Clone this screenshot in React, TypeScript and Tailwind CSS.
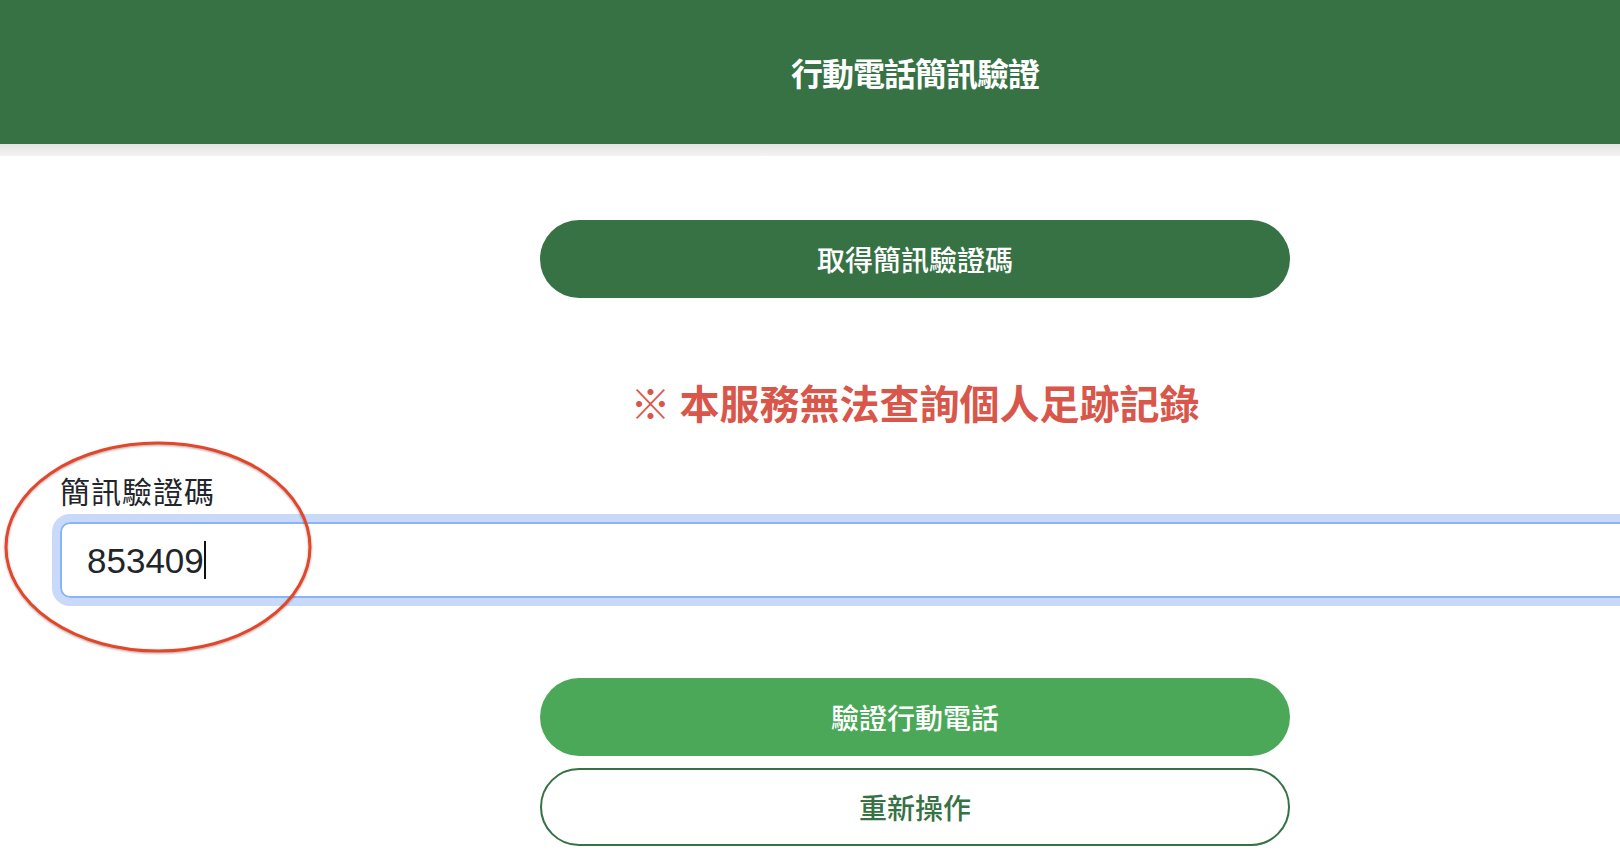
const cjk = { fontFamily: '"Noto Sans CJK TC", "Noto Sans", sans-serif' };

export default function App() {
  return (
    <div className="relative w-[1620px] h-[860px] overflow-hidden bg-white" style={cjk}>
      <div className="w-[1830px]">
        {/* Header */}
        <header className="h-[144px] bg-[#367244] flex items-center justify-center">
          <h1 className="text-white text-[32px] font-bold tracking-[-1px] leading-none">行動電話簡訊驗證</h1>
        </header>
        <div className="h-[12px] bg-gradient-to-b from-[#e4e4e4] to-[#f3f3f3]" />

        <main className="px-[60px] pt-[64px]">
          <div className="flex justify-center">
            <button className="w-[750px] h-[78px] rounded-full bg-[#367244] text-white text-[28px] font-medium">
              取得簡訊驗證碼
            </button>
          </div>

          <p className="mt-[78px] text-center text-[40px] leading-[52px] font-bold text-[#d9574a]">
            ※ 本服務無法查詢個人足跡記錄
          </p>

          <label className="block mt-[44px] text-[30px] leading-[36px] tracking-[1px] text-[#212529]">
            簡訊驗證碼
          </label>
          <div className="mt-[14px] h-[76px] rounded-[10px] border-2 border-[#8ab4f8] shadow-[0_0_0_8px_#c9d9f9] flex items-center pl-[25px]">
            <span
              className="text-[35px] text-[#212529] leading-none"
              style={{ fontFamily: '"Liberation Sans", Arial, sans-serif' }}
            >
              853409
            </span>
            <span className="w-[2px] h-[38px] bg-[#111]" />
          </div>

          <div className="mt-[80px] flex flex-col items-center gap-[12px]">
            <button className="w-[750px] h-[78px] rounded-full bg-[#4ba858] text-white text-[28px] font-medium">
              驗證行動電話
            </button>
            <button className="w-[750px] h-[78px] rounded-full border-2 border-[#367244] bg-white text-[#367244] text-[28px] font-medium">
              重新操作
            </button>
          </div>
        </main>
      </div>

      {/* annotation circle */}
      <svg className="absolute left-0 top-0 pointer-events-none" width="340" height="700" viewBox="0 0 340 700">
        <defs>
          <filter id="sh" x="-10%" y="-10%" width="120%" height="120%">
            <feDropShadow dx="0" dy="1" stdDeviation="1.2" floodColor="#000" floodOpacity="0.35" />
          </filter>
        </defs>
        <ellipse cx="158" cy="547" rx="152" ry="104" fill="none" stroke="#e2462c" strokeWidth="3" filter="url(#sh)" />
      </svg>
    </div>
  );
}
